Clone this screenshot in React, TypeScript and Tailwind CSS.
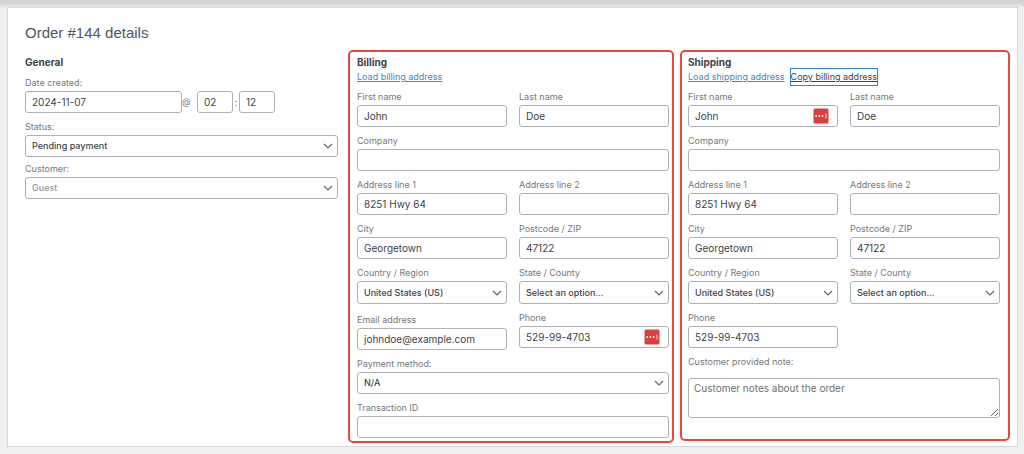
import React from 'react';
import clsx from 'clsx';

interface FieldProps {
  id: string;
  label: string;
  value?: string;
  autofill?: boolean;
  className?: string;
}

interface SelectFieldProps {
  id: string;
  label: string;
  options: string[];
  muted?: boolean;
  tall?: boolean;
}

const labelClass = 'block text-[9px] leading-4 text-[#74787c] whitespace-nowrap';
const boxClass =
  'block w-full rounded-[3px] border border-[#aeb1b4] bg-white px-1.5 outline-none focus:border-[#2271b1]';
const inputClass = clsx(boxClass, 'h-[22px] text-[10px] text-[#3c4248]');

const AutofillIcon = () => (
  <svg className="absolute right-[9px] top-[3px] w-4 h-4" viewBox="0 0 16 16" aria-hidden="true">
    <rect x="0.5" y="0.5" width="15" height="15" rx="1.5" fill="#d9403c" />
    <circle cx="3.2" cy="8" r="0.9" fill="#fff" />
    <circle cx="6.4" cy="8" r="0.9" fill="#fff" />
    <circle cx="9.6" cy="8" r="0.9" fill="#fff" />
    <path d="M13 5.5v5" stroke="#fbdad9" strokeWidth="1" />
  </svg>
);

const Chevron = () => (
  <svg
    className="pointer-events-none absolute right-[5px] top-1/2 -translate-y-1/2 w-2.5 h-2.5"
    viewBox="0 0 10 10"
    fill="none"
    stroke="#5f646a"
    strokeWidth="1.2"
    aria-hidden="true"
  >
    <path d="M1 3l4 4 4-4" />
  </svg>
);

const Field: React.FC<FieldProps> = ({ id, label, value = '', autofill, className }) => (
  <div className={className}>
    <label htmlFor={id} className={labelClass}>{label}</label>
    <div className="relative">
      <input id={id} type="text" defaultValue={value} className={inputClass} />
      {autofill && <AutofillIcon />}
    </div>
  </div>
);

const SelectField: React.FC<SelectFieldProps> = ({ id, label, options, muted, tall }) => (
  <div>
    <label htmlFor={id} className={labelClass}>{label}</label>
    <div className="relative">
      <select
        id={id}
        className={clsx(
          boxClass,
          'appearance-none text-[9px] font-medium',
          tall ? 'h-[23px]' : 'h-[22px]',
          muted ? 'text-[#94979b]' : 'text-[#3c4248]'
        )}
      >
        {options.map((option) => (
          <option key={option}>{option}</option>
        ))}
      </select>
      <Chevron />
    </div>
  </div>
);

const AddressFields = ({ prefix, autofill }: { prefix: string; autofill?: boolean }) => (
  <>
    <div className="grid grid-cols-2 gap-x-3">
      <Field id={`${prefix}_first_name`} label="First name" value="John" autofill={autofill} />
      <Field id={`${prefix}_last_name`} label="Last name" value="Doe" />
    </div>
    <Field id={`${prefix}_company`} label="Company" />
    <div className="grid grid-cols-2 gap-x-3">
      <Field id={`${prefix}_address_1`} label="Address line 1" value="8251 Hwy 64" />
      <Field id={`${prefix}_address_2`} label="Address line 2" />
    </div>
    <div className="grid grid-cols-2 gap-x-3">
      <Field id={`${prefix}_city`} label="City" value="Georgetown" />
      <Field id={`${prefix}_postcode`} label="Postcode / ZIP" value="47122" />
    </div>
    <div className="grid grid-cols-2 gap-x-3">
      <SelectField id={`${prefix}_country`} label="Country / Region" options={['United States (US)']} tall />
      <SelectField id={`${prefix}_state`} label="State / County" options={['Select an option...', 'Indiana']} tall />
    </div>
  </>
);

const headingClass = 'text-[10px] leading-[14px] font-bold text-[#3c4248]';
const linkClass = 'text-[#3f87c4] underline';

export default function App() {
  return (
    <div className="min-h-screen bg-[#f0f0f1] pb-1.5 font-['Inter',sans-serif]">
      <div className="h-[7px] bg-gradient-to-b from-[#d2d4d6] from-40% to-[#e6e7e8]" />
      <main className="ml-[7px] mr-1.5 border border-[#d6d7d9] bg-white pt-4 pb-[3px] pl-[17px] pr-[7px]">
        <h1 className="font-['Liberation_Sans',sans-serif] text-[15px] leading-[18px] text-[#50565c] mb-2">
          Order #144 details
        </h1>

        <form className="grid grid-cols-[317fr_326fr_330fr] gap-x-1.5">
          <section className="min-w-0 pr-1 pt-[5px]">
            <h2 className={headingClass}>General</h2>
            <div className="mt-1.5">
              <label htmlFor="order_date" className={labelClass}>Date created:</label>
              <div className="flex items-center text-[10px] text-[#74787c]">
                <input id="order_date" type="text" defaultValue="2024-11-07" className={clsx(inputClass, 'max-w-[157px]')} />
                <span className="w-[15px] shrink-0 text-[9px]">@</span>
                <input type="text" aria-label="Hour" defaultValue="02" className={clsx(inputClass, 'max-w-9')} />
                <span className="w-1.5 shrink-0 text-center">:</span>
                <input type="text" aria-label="Minute" defaultValue="12" className={clsx(inputClass, 'max-w-9')} />
              </div>
            </div>
            <div className="mt-1.5 flex flex-col gap-1">
              <SelectField id="order_status" label="Status:" options={['Pending payment', 'Processing', 'Completed']} />
              <SelectField id="customer_user" label="Customer:" options={['Guest']} muted />
            </div>
          </section>

          <section className="min-w-0 rounded-[5px] border-2 border-[#e5493e] pt-[3px] pb-[3px] pl-[7px] pr-[3px]">
            <h2 className={headingClass}>Billing</h2>
            <div className="text-[9px] leading-4">
              <a href="#load-billing" className={linkClass}>Load billing address</a>
            </div>
            <div className="mt-1 flex flex-col gap-1.5">
              <AddressFields prefix="billing" />
              <div className="grid grid-cols-2 gap-x-3">
                <Field id="billing_email" label="Email address" value="johndoe@example.com" className="pt-0.5" />
                <Field id="billing_phone" label="Phone" value="529-99-4703" autofill />
              </div>
              <SelectField id="payment_method" label="Payment method:" options={['N/A']} />
              <Field id="transaction_id" label="Transaction ID" />
            </div>
          </section>

          <section className="mb-0.5 min-w-0 rounded-[5px] border-2 border-[#e5493e] pt-[3px] pl-1.5 pr-2">
            <h2 className={headingClass}>Shipping</h2>
            <div className="flex gap-1.5 whitespace-nowrap text-[9px] leading-4">
              <a href="#load-shipping" className={linkClass}>Load shipping address</a>
              <a href="#copy-billing" className="text-[#3c4248] underline outline-1 outline-[#3582c4]">
                Copy billing address
              </a>
            </div>
            <div className="mt-1 flex flex-col gap-1.5">
              <AddressFields prefix="shipping" autofill />
              <div className="grid grid-cols-2 gap-x-3">
                <Field id="shipping_phone" label="Phone" value="529-99-4703" />
              </div>
              <div>
                <label htmlFor="customer_note" className={labelClass}>Customer provided note:</label>
                <textarea
                  id="customer_note"
                  placeholder="Customer notes about the order"
                  className="mt-2 block h-10 w-full resize-y rounded-[3px] border border-[#aeb1b4] px-[5px] py-0.5 text-[10px] leading-[14px] placeholder:text-[#6b7075] outline-none"
                />
              </div>
            </div>
          </section>
        </form>
      </main>
    </div>
  );
}
